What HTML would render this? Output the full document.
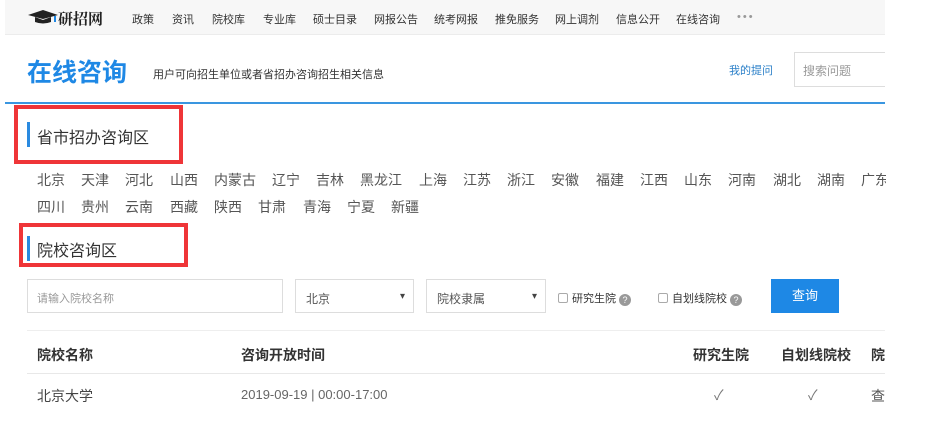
<!DOCTYPE html>
<html><head><meta charset="utf-8"><style>
*{margin:0;padding:0;box-sizing:border-box}
body{width:925px;height:430px;background:#fff;font-family:"Liberation Sans","Noto Sans CJK SC",sans-serif;position:relative;overflow:hidden;color:#333}
.a{position:absolute;white-space:nowrap}
.nav{position:absolute;left:5px;top:0;width:880px;height:35px;background:#f7f7f7;border-bottom:1px solid #ececec}
.nav span{position:absolute;top:11px;font-size:11px;color:#333}
.prov span{position:absolute;font-size:14px;color:#555}
.rb{position:absolute;border:4px solid #ef3538}
.sel{position:absolute;top:279px;height:34px;border:1px solid #ddd;font-size:12px;color:#555;padding:10px 10px}
.sel:after{content:"▾";position:absolute;right:8px;top:11px;font-size:10px;color:#444}
.q{display:inline-block;width:12px;height:12px;border-radius:50%;background:#999;color:#fff;font-size:9px;text-align:center;line-height:12px;vertical-align:-1px}
.cb{display:inline-block;width:10px;height:10px;border:1px solid #aaa;border-radius:2px;vertical-align:-1px;margin-right:4px}
</style></head><body>
<div class="nav">
<svg class="a" style="left:23px;top:10px" width="30" height="14" viewBox="0 0 30 14"><path d="M0 5 L15 0 L30 5 L15 9Z" fill="#222"/><path d="M7 7 L7 12 Q15 15 23 12 L23 7 L15 10Z" fill="#222"/><path d="M27 6 L27 12" stroke="#1e88e5" stroke-width="2"/></svg>
<span style="left:53px;top:8px;font-size:15px;font-weight:bold;font-family:'Noto Serif CJK SC',serif;color:#222">研招网</span>
<span style="left:127px">政策</span><span style="left:167px">资讯</span><span style="left:207px">院校库</span><span style="left:258px">专业库</span><span style="left:308px">硕士目录</span><span style="left:369px">网报公告</span><span style="left:429px">统考网报</span><span style="left:490px">推免服务</span><span style="left:550px">网上调剂</span><span style="left:611px">信息公开</span><span style="left:671px">在线咨询</span><span style="left:732px;top:11px;color:#999;letter-spacing:2px">•••</span>
</div>
<div class="a" style="left:27px;top:53px;font-size:25px;font-weight:bold;color:#1e88e5">在线咨询</div>
<div class="a" style="left:153px;top:66px;font-size:11px;color:#333">用户可向招生单位或者省招办咨询招生相关信息</div>
<div class="a" style="left:729px;top:62px;font-size:11px;color:#2a7fc8">我的提问</div>
<div class="a" style="left:794px;top:52px;width:110px;height:35px;border:1px solid #ddd;font-size:12px;color:#999;padding:9px 8px">搜索问题</div>
<div class="a" style="left:885px;top:40px;width:40px;height:60px;background:#fff"></div>
<div class="a" style="left:5px;top:102px;width:880px;height:2px;background:#3a96e0"></div>
<div class="a" style="left:27px;top:122px;width:3px;height:25px;background:#2a8ae0"></div>
<div class="a" style="left:37px;top:124px;font-size:16px;color:#333">省市招办咨询区</div>
<div class="rb" style="left:14px;top:105px;width:169px;height:59px"></div>
<div class="prov">
<span style="left:37px;top:170px">北京</span><span style="left:81px;top:170px">天津</span><span style="left:125px;top:170px">河北</span><span style="left:170px;top:170px">山西</span><span style="left:214px;top:170px">内蒙古</span><span style="left:272px;top:170px">辽宁</span><span style="left:316px;top:170px">吉林</span><span style="left:360px;top:170px">黑龙江</span><span style="left:419px;top:170px">上海</span><span style="left:463px;top:170px">江苏</span><span style="left:507px;top:170px">浙江</span><span style="left:551px;top:170px">安徽</span><span style="left:596px;top:170px">福建</span><span style="left:640px;top:170px">江西</span><span style="left:684px;top:170px">山东</span><span style="left:728px;top:170px">河南</span><span style="left:773px;top:170px">湖北</span><span style="left:817px;top:170px">湖南</span><span style="left:861px;top:170px">广东</span>
<span style="left:37px;top:197px">四川</span><span style="left:81px;top:197px">贵州</span><span style="left:125px;top:197px">云南</span><span style="left:170px;top:197px">西藏</span><span style="left:214px;top:197px">陕西</span><span style="left:258px;top:197px">甘肃</span><span style="left:303px;top:197px">青海</span><span style="left:347px;top:197px">宁夏</span><span style="left:391px;top:197px">新疆</span>
</div>
<div class="a" style="left:886px;top:160px;width:39px;height:60px;background:#fff"></div>
<div class="a" style="left:27px;top:236px;width:3px;height:25px;background:#2a8ae0"></div>
<div class="a" style="left:37px;top:237px;font-size:16px;color:#333">院校咨询区</div>
<div class="rb" style="left:19px;top:223px;width:169px;height:44px"></div>
<div class="a" style="left:27px;top:279px;width:256px;height:34px;border:1px solid #ddd;font-size:11px;color:#999;padding:10px 9px">请输入院校名称</div>
<div class="sel" style="left:295px;width:119px">北京</div>
<div class="sel" style="left:426px;width:120px">院校隶属</div>
<div class="a" style="left:558px;top:290px;font-size:11px;color:#333"><span class="cb"></span>研究生院 <span class="q">?</span></div>
<div class="a" style="left:658px;top:290px;font-size:11px;color:#333"><span class="cb"></span>自划线院校 <span class="q">?</span></div>
<div class="a" style="left:771px;top:279px;width:68px;height:34px;background:#1e88e5;color:#fff;font-size:13px;text-align:center;line-height:34px">查询</div>
<div class="a" style="left:27px;top:330px;width:858px;height:1px;background:#eee"></div>
<div class="a" style="left:27px;top:373px;width:858px;height:1px;background:#e8e8e8"></div>
<div class="a" style="left:37px;top:345px;font-size:14px;color:#333;font-weight:bold">院校名称</div>
<div class="a" style="left:241px;top:345px;font-size:14px;color:#333;font-weight:bold">咨询开放时间</div>
<div class="a" style="left:693px;top:345px;font-size:14px;color:#333;font-weight:bold">研究生院</div>
<div class="a" style="left:781px;top:345px;font-size:14px;color:#333;font-weight:bold">自划线院校</div>
<div class="a" style="left:871px;top:345px;font-size:14px;color:#333;font-weight:bold;width:14px;overflow:hidden">院</div>
<div class="a" style="left:37px;top:386px;font-size:14px;color:#444">北京大学</div>
<div class="a" style="left:241px;top:387px;font-size:13px;color:#666">2019-09-19 | 00:00-17:00</div>
<div class="a" style="left:714px;top:385px;font-size:14px;color:#777">✓</div>
<div class="a" style="left:808px;top:385px;font-size:14px;color:#777">✓</div>
<div class="a" style="left:871px;top:386px;font-size:14px;color:#555;width:14px;overflow:hidden">查</div>
</body></html>
